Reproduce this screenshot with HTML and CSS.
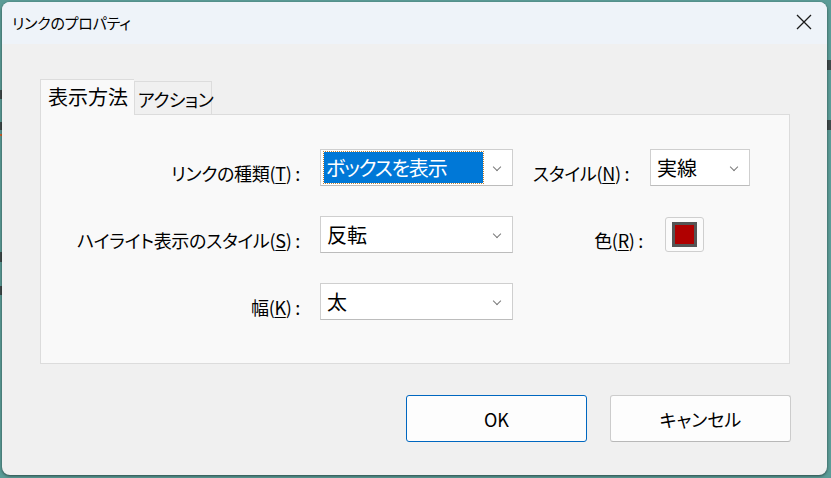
FILE: index.html
```html
<!DOCTYPE html>
<html lang="ja">
<head>
<meta charset="utf-8">
<title>リンクのプロパティ</title>
<link rel="stylesheet" href="styles.css">
</head>
<body>
<div class="window">
  <div class="titlebar">
    <span class="title">リンクのプロパティ</span>
    <button class="close" aria-label="閉じる">
      <svg width="16" height="16" viewBox="0 0 16 16"><path d="M1 1 L15 15 M15 1 L1 15" stroke="#1a1a1a" stroke-width="1.3" fill="none"/></svg>
    </button>
  </div>
  <div class="content">
    <div class="tabs">
      <div class="tab active">表示方法</div>
      <div class="tab">アクション</div>
    </div>
    <div class="panel">
      <div class="form">
        <label class="lbl">リンクの種類(<u>T</u>) :</label>
        <div class="select focused"><span class="sel-text">ボックスを表示</span><span class="chev"></span></div>
        <div class="side">
          <label class="lbl lbl-style">スタイル(<u>N</u>) :</label>
          <div class="select small"><span class="sel-text">実線</span><span class="chev"></span></div>
        </div>

        <label class="lbl">ハイライト表示のスタイル(<u>S</u>) :</label>
        <div class="select"><span class="sel-text">反転</span><span class="chev"></span></div>
        <div class="side">
          <label class="lbl lbl-color">色(<u>R</u>) :</label>
          <button class="swatch"><span class="swatch-fill"></span></button>
        </div>

        <label class="lbl">幅(<u>K</u>) :</label>
        <div class="select"><span class="sel-text">太</span><span class="chev"></span></div>
        <div class="side"></div>
      </div>
    </div>
    <div class="actions">
      <button class="btn primary">OK</button>
      <button class="btn">キャンセル</button>
    </div>
  </div>
</div>
</body>
</html>
```

FILE: styles.css
```css
html, body {
  margin: 0;
  padding: 0;
}

body {
  width: 831px;
  height: 478px;
  overflow: hidden;
  background-color: #5b9c97;
  background-image:
    linear-gradient(#3f4a4a, #3f4a4a),
    linear-gradient(#3f4a4a, #3f4a4a),
    linear-gradient(#d4622a, #d4622a),
    linear-gradient(#3f4a4a, #3f4a4a),
    linear-gradient(#3f4a4a, #3f4a4a),
    linear-gradient(#3f4a4a, #3f4a4a),
    linear-gradient(#3f4a4a, #3f4a4a);
  background-size: 2px 9px, 2px 8px, 2px 2px, 2px 10px, 2px 9px, 4px 10px, 4px 10px;
  background-position: 0 90px, 0 122px, 0 134px, 0 252px, 0 286px, 827px 60px, 827px 120px;
  background-repeat: no-repeat;
  font-family: "Noto Sans CJK JP", "Noto Sans", sans-serif;
  font-feature-settings: "palt";
  color: #000;
}

.window {
  margin: 2px 0 0 2px;
  width: 825px;
  height: 473px;
  border-radius: 8px;
  background: #f0f0f0;
  box-shadow: 0 1px 3px rgba(0, 0, 0, 0.55);
  overflow: hidden;
  display: flex;
  flex-direction: column;
}

.titlebar {
  height: 42px;
  background: #eef3f9;
  display: flex;
  align-items: center;
  justify-content: space-between;
  padding: 0 14px 0 10px;
}

.title {
  font-size: 15px;
  letter-spacing: -0.2px;
  padding-bottom: 2px;
}

.close {
  border: 0;
  background: none;
  padding: 0;
  width: 16px;
  height: 16px;
  margin-right: 1px;
  margin-bottom: 2px;
}

.close svg {
  display: block;
}

.content {
  flex: 1;
  padding: 35px 0 0 38px;
}

.tabs {
  display: flex;
  align-items: flex-end;
  height: 35px;
  position: relative;
  z-index: 1;
}

.tab {
  line-height: 1;
  white-space: nowrap;
  border: 1px solid #dcdcdc;
  border-bottom: 0;
  box-sizing: border-box;
}

.tab.active {
  background: #f9f9f9;
  height: 36px;
  width: 94px;
  padding: 7px 0 0 7px;
  margin-bottom: -1px;
  font-size: 20px;
  border-right: 0;
}

.tab:not(.active) {
  background: #f0f0f0;
  height: 33px;
  width: 78px;
  padding: 8px 0 0 3px;
  margin-bottom: 0;
  font-size: 18px;
  letter-spacing: -0.6px;
}

.panel {
  width: 750px;
  height: 250px;
  box-sizing: border-box;
  border: 1px solid #dcdcdc;
  background: #f9f9f9;
  padding-top: 34px;
}

.form {
  display: grid;
  grid-template-columns: 259px 193px 1fr;
  column-gap: 20px;
  row-gap: 30px;
  grid-auto-rows: 37px;
}

.lbl {
  font-size: 18px;
  text-align: right;
  align-self: center;
  padding-top: 11px;
  white-space: nowrap;
  letter-spacing: -0.3px;
}

.lbl u {
  text-decoration-thickness: 1px;
  text-underline-offset: 2px;
}

.select {
  position: relative;
  border: 1px solid #cfcfcf;
  border-bottom-color: #bcbcbc;
  background: #fff;
  box-sizing: border-box;
  height: 37px;
  display: flex;
  align-items: center;
  padding: 0 2px;
  font-size: 20px;
}

.sel-text {
  padding-left: 4px;
  line-height: 31px;
  height: 31px;
  white-space: nowrap;
}

.focused .sel-text {
  background: #0078d7;
  color: #fff;
  width: 159px;
  box-sizing: border-box;
  padding-left: 2px;
  letter-spacing: -1.2px;
  outline: 1px dotted #c08030;
  outline-offset: 0;
  margin-left: 1px;
}

.chev {
  position: absolute;
  right: 12px;
  top: 14px;
  width: 5px;
  height: 5px;
  border-right: 1px solid #7a7a7a;
  border-bottom: 1px solid #7a7a7a;
  transform: rotate(45deg);
}

.side {
  display: flex;
  align-items: flex-start;
  gap: 22px;
}

.lbl-style {
  width: 95px;
  align-self: auto;
}

.select.small {
  width: 100px;
}

.lbl-color {
  width: 110px;
  align-self: auto;
}

.swatch {
  width: 39px;
  height: 35px;
  margin-top: 1px;
  border: 1px solid #cfcfcf;
  border-radius: 3px;
  background: #fbfbfb;
  padding: 0;
  display: flex;
  align-items: center;
  justify-content: center;
}

.swatch-fill {
  width: 19px;
  height: 19px;
  border: 3px solid #555;
  background: #b00000;
}

.actions {
  display: flex;
  gap: 23px;
  padding: 31px 0 0 366px;
}

.btn {
  width: 181px;
  height: 47px;
  border: 1px solid #cccccc;
  border-bottom-color: #b8b8b8;
  border-radius: 3px;
  background: #fdfdfd;
  font-family: "Noto Sans CJK JP", "Noto Sans", sans-serif;
  font-feature-settings: "palt";
  font-size: 18px;
  font-weight: 400;
  color: #000;
  padding: 0;
}

.btn.primary {
  border: 1px solid #0067c0;
}
```
